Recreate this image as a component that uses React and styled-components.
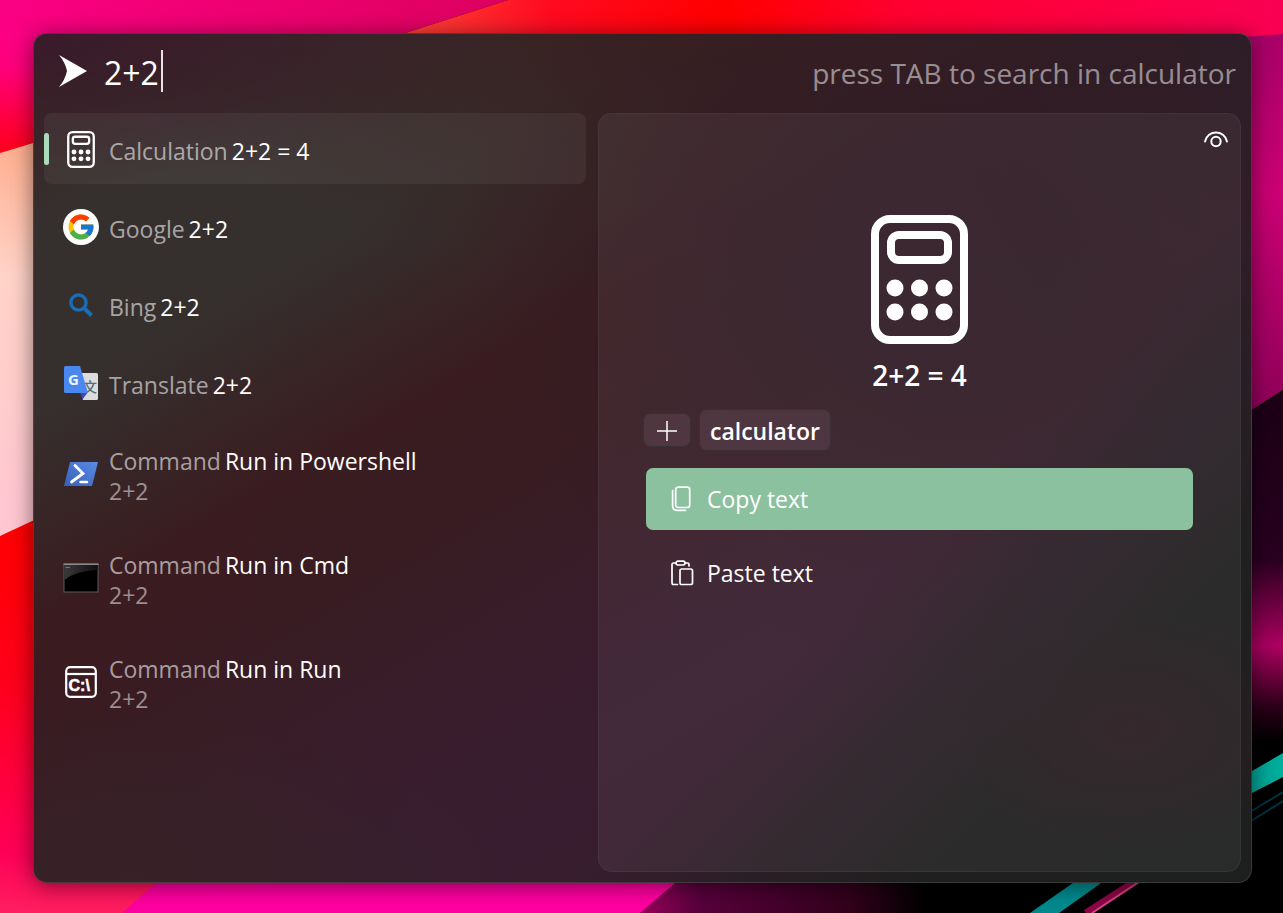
import React from 'react';
import styled, { createGlobalStyle } from 'styled-components';
import { FcGoogle } from 'react-icons/fc';

const GlobalStyle = createGlobalStyle`
  * {
    box-sizing: border-box;
  }
  body {
    margin: 0;
    background: #000;
    color: #fff;
    font-family: 'Open Sans', 'Noto Sans', sans-serif;
  }
  button,
  input {
    font: inherit;
    color: inherit;
    border: none;
    background: none;
    padding: 0;
    margin: 0;
  }
  svg {
    display: block;
    flex: none;
  }
`;

// wallpaper and window share one grid cell
const Desktop = styled.div`
  display: grid;
  min-height: 100vh;
  overflow: hidden;
  & > * {
    grid-area: 1 / 1;
  }
`;

const WallpaperSvg = styled.svg`
  width: 100%;
  height: 100%;
  min-height: 0;
  contain: size;
`;

const Launcher = styled.main`
  z-index: 1;
  display: flex;
  flex-direction: column;
  margin: 33px 31px 30px 33px;
  border: 1px solid rgba(120, 120, 120, 0.3);
  border-radius: 14px;
  background:
    radial-gradient(ellipse 16% 14% at 90% 82%, #2b1c21, rgba(43, 28, 33, 0)),
    linear-gradient(135deg, rgba(32, 31, 31, 0) 67%, #211f20 82%, #1d1f1f 100%),
    radial-gradient(ellipse 30% 50% at 100% 0%, #2e1d27, rgba(46, 29, 39, 0)),
    radial-gradient(ellipse 40% 18% at 0% 0%, #3a1a2a, rgba(58, 26, 42, 0)),
    radial-gradient(ellipse 40% 50% at 76% 26%, #301c25 20%, rgba(48, 28, 37, 0)),
    radial-gradient(ellipse 50% 28% at 55% 0%, #3a1f20, rgba(58, 31, 32, 0)),
    radial-gradient(ellipse 30% 20% at 8% 100%, #372226, rgba(55, 34, 38, 0)),
    linear-gradient(150deg, #372623 0%, #35302e 14%, #35302e 24%, #3a1c20 38%, #391c22 46%, #381d30 66%, #351d2a 100%);
  background-clip: border-box;
  background-origin: border-box;
  box-shadow: 0 3px 22px rgba(0, 0, 0, 0.5);
`;

const Header = styled.header`
  display: flex;
  align-items: center;
  height: 79px;
  padding: 0 15px 2px 25px;
`;

const Logo = styled.span`
  margin-bottom: 4px;
`;

const Query = styled.input`
  margin-left: 17px;
  width: 57px;
  font-size: 32px;
  line-height: 44px;
  outline: none;
  caret-color: transparent;
`;

const Caret = styled.span`
  width: 2px;
  height: 42px;
  margin-bottom: 4px;
  background: #e8e4e6;
`;

const Hint = styled.span`
  flex: 1;
  text-align: right;
  font-size: 28px;
  line-height: 44px;
  color: rgba(255, 255, 255, 0.5);
`;

const Body = styled.div`
  flex: 1;
  display: grid;
  grid-template-columns: 542fr 643fr;
  gap: 12px;
  padding: 0 10px 10px;
`;

const Results = styled.ul`
  display: flex;
  flex-direction: column;
  gap: 7px;
  margin: 0;
  padding: 0;
  list-style: none;
`;

const Row = styled.button`
  display: flex;
  align-items: center;
  gap: 10px;
  width: 100%;
  height: ${({ $tall }) => ($tall ? 97 : 71)}px;
  padding-top: 1px;
  text-align: left;
  border-radius: 8px;
  background: ${({ $active }) => ($active ? 'rgba(255, 255, 255, 0.055)' : 'none')};
  &::before {
    content: '';
    width: 5px;
    height: 32px;
    margin-right: 4px;
    border-radius: 3px;
    background: ${({ $active }) => ($active ? '#aadcbb' : 'none')};
  }
`;

const IconBox = styled.span`
  display: flex;
  align-items: center;
  justify-content: center;
  width: 36px;
  height: 36px;
  border-radius: 50%;
  background: ${({ $disc }) => ($disc ? '#fff' : 'none')};
`;

const Texts = styled.span`
  display: flex;
  flex-direction: column;
  padding-top: 3px;
`;

const Title = styled.span`
  display: flex;
  gap: 4px;
  font-size: 23px;
  line-height: 30px;
  white-space: nowrap;
`;

const Kind = styled.span`
  color: rgba(255, 255, 255, 0.58);
`;

const Subtitle = styled.span`
  font-size: 23px;
  line-height: 30px;
  color: rgba(255, 255, 255, 0.5);
`;

const Preview = styled.section`
  display: flex;
  flex-direction: column;
  padding: 12px 10px;
  border: 1px solid rgba(100, 110, 110, 0.16);
  border-radius: 14px;
  background: rgba(255, 255, 255, 0.055);
`;

const EyeButton = styled.button`
  align-self: flex-end;
  width: 28px;
  height: 28px;
`;

const Hero = styled.div`
  display: flex;
  flex-direction: column;
  align-items: center;
  gap: 12px;
  padding-top: 61px;
`;

const Answer = styled.h1`
  margin: 0;
  font-size: 28px;
  font-weight: 600;
  line-height: 38px;
`;

const Tags = styled.div`
  display: flex;
  align-items: center;
  gap: 8px;
  padding: 15px 34px 0;
`;

const Tag = styled.button`
  display: flex;
  align-items: center;
  justify-content: center;
  height: ${({ $small }) => ($small ? 34 : 42)}px;
  min-width: 48px;
  padding: 2px 10px 0;
  border: 1px solid rgba(50, 56, 56, 0.5);
  border-radius: 7px;
  background: rgba(255, 225, 255, 0.08);
  background-clip: padding-box;
  font-size: 23px;
  font-weight: 600;
`;

const Actions = styled.div`
  display: flex;
  flex-direction: column;
  gap: 12px;
  padding: 17px 37px 0;
`;

const Action = styled.button`
  display: flex;
  align-items: center;
  gap: 12px;
  height: 62px;
  padding-left: 24px;
  border-radius: 7px;
  font-size: 23px;
  background: ${({ $primary }) => ($primary ? '#8cc19f' : 'none')};
`;

const Wallpaper = () => (
  <WallpaperSvg viewBox="0 0 1283 913" preserveAspectRatio="none" aria-hidden="true">
    <defs>
      <linearGradient id="magenta" x1="0" y1="0" x2="1" y2="0">
        <stop offset="0" stopColor="#fb0084" />
        <stop offset="0.5" stopColor="#ee0070" />
        <stop offset="1" stopColor="#dd0060" />
      </linearGradient>
      <linearGradient id="leftFade" x1="0" y1="0" x2="0" y2="1">
        <stop offset="0" stopColor="#fb0084" />
        <stop offset="0.3" stopColor="#ff007c" />
        <stop offset="1" stopColor="#ff0018" />
      </linearGradient>
      <linearGradient id="red" x1="0" y1="0" x2="1" y2="0">
        <stop offset="0.05" stopColor="#ff5040" />
        <stop offset="0.24" stopColor="#ff0a20" />
        <stop offset="0.42" stopColor="#ff0000" />
        <stop offset="0.6" stopColor="#ff0030" />
        <stop offset="1" stopColor="#fa0054" />
      </linearGradient>
      <linearGradient id="pale" x1="0" y1="0" x2="0" y2="1">
        <stop offset="0" stopColor="#ffac8c" />
        <stop offset="0.35" stopColor="#ffd3c8" />
        <stop offset="1" stopColor="#ffc6d2" />
      </linearGradient>
      <linearGradient id="lowerLeft" x1="0" y1="0" x2="0" y2="1">
        <stop offset="0" stopColor="#ff0000" />
        <stop offset="0.4" stopColor="#ff0018" />
        <stop offset="0.85" stopColor="#ff0058" />
        <stop offset="1" stopColor="#ff1f60" />
      </linearGradient>
      <linearGradient id="rightEdge" x1="0" y1="0" x2="0" y2="1">
        <stop offset="0" stopColor="#a80068" />
        <stop offset="0.4" stopColor="#cc0074" />
        <stop offset="1" stopColor="#8c0058" />
      </linearGradient>
      <linearGradient id="night" x1="0" y1="0" x2="0" y2="1">
        <stop offset="0" stopColor="#1c0016" />
        <stop offset="0.38" stopColor="#280020" />
        <stop offset="0.58" stopColor="#ac0060" />
        <stop offset="0.72" stopColor="#2a0018" />
        <stop offset="0.8" stopColor="#000" />
        <stop offset="1" stopColor="#000" />
      </linearGradient>
      <linearGradient id="bottomFade" x1="0" y1="0" x2="1" y2="0">
        <stop offset="0" stopColor="#98005c" />
        <stop offset="0.14" stopColor="#58003c" />
        <stop offset="0.5" stopColor="#33001c" />
        <stop offset="0.68" stopColor="#000" />
      </linearGradient>
      <linearGradient id="teal" x1="0" y1="0" x2="1" y2="0">
        <stop offset="0" stopColor="#009c94" />
        <stop offset="1" stopColor="#00b09c" />
      </linearGradient>
    </defs>
    <rect width="1283" height="913" fill="#000" />
    <path d="M0 0H508L321 60H0Z" fill="url(#magenta)" />
    <path d="M0 30H60V140L0 155Z" fill="url(#leftFade)" />
    <path d="M508 0H1283V60H321Z" fill="url(#red)" />
    <path d="M0 153L60 135V518L0 537Z" fill="url(#pale)" />
    <path d="M0 536L60 508V860L200 870V913H0Z" fill="url(#lowerLeft)" />
    <path d="M182 860H740L640 913H122Z" fill="#ff00a0" />
    <path d="M702 860H1060V913H640Z" fill="url(#bottomFade)" />
    <path d="M1230 38L1283 34V390L1230 424Z" fill="url(#rightEdge)" />
    <path d="M1230 424L1283 392V830H1230Z" fill="url(#night)" />
    <path d="M1240 778L1283 753V777L1240 799Z" fill="url(#teal)" />
    <path d="M1240 828L1283 801M1240 818L1283 792" stroke="#013442" strokeWidth="2" />
    <path d="M1100 864L1030 913H1059L1128 864Z" fill="#008a8e" />
    <path d="M1162 864L1086 913" stroke="#8e0546" strokeWidth="7" />
    <path d="M1166 864L1092 913" stroke="#d64585" strokeWidth="2" />
  </WallpaperSvg>
);

const ArrowLogo = () => (
  <svg width="28" height="34" viewBox="0 0 28 34" fill="#fff">
    <path d="M0 1Q14 9 28 17Q14 25 0 33Q6 26 8 17Q6 8 0 1Z" />
  </svg>
);

const CalculatorIcon = ({ width, height }) => (
  <svg width={width} height={height} viewBox="0 0 97 129" fill="none" stroke="#fff" strokeWidth="8">
    <rect x="4" y="4" width="89" height="121" rx="15" />
    <rect x="20" y="20" width="57" height="25" rx="8" />
    <g fill="#fff" stroke="none">
      <circle cx="24" cy="73" r="8.5" />
      <circle cx="48.5" cy="73" r="8.5" />
      <circle cx="73" cy="73" r="8.5" />
      <circle cx="24" cy="97" r="8.5" />
      <circle cx="48.5" cy="97" r="8.5" />
      <circle cx="73" cy="97" r="8.5" />
    </g>
  </svg>
);

const SearchIcon = () => (
  <svg width="24" height="24" viewBox="0 0 24 24" fill="none" stroke="#1a6db5" strokeWidth="3.4">
    <circle cx="9.5" cy="9.5" r="7.6" />
    <path d="M15 15L22.5 22.5" strokeWidth="4" />
  </svg>
);

const TranslateIcon = () => (
  <svg width="36" height="36" viewBox="0 0 36 36">
    <path d="M14 8H33.5Q35 8 35 9.5V33.5Q35 35 33.5 35H20Z" fill="#dcdcdc" />
    <text x="20" y="27" fontSize="14" fontWeight="500" fill="#546e7a" fontFamily="Noto Sans CJK SC, sans-serif">
      文
    </text>
    <path d="M17 27H25L19.5 34.5Z" fill="#3f48b8" />
    <path d="M2.5 1H17L25 28H2.5Q1 28 1 26.5V2.5Q1 1 2.5 1Z" fill="#4a87ee" />
    <text x="5" y="20" fontSize="15" fontWeight="700" fill="#eef3fd" fontFamily="Open Sans, sans-serif">
      G
    </text>
  </svg>
);

const PowershellIcon = () => (
  <svg width="36" height="26" viewBox="0 0 36 26" fill="none">
    <defs>
      <linearGradient id="ps" x1="0" y1="1" x2="1" y2="0">
        <stop offset="0" stopColor="#3660b8" />
        <stop offset="1" stopColor="#5a8ae6" />
      </linearGradient>
    </defs>
    <path d="M7 1H35L29 25H1Z" fill="url(#ps)" />
    <path d="M12 4.5L20 12.5L8.5 21" stroke="#fff" strokeWidth="2.8" strokeLinecap="round" />
    <path d="M17.5 21H24" stroke="#fff" strokeWidth="2.5" strokeLinecap="round" />
  </svg>
);

const CmdIcon = () => (
  <svg width="36" height="30" viewBox="0 0 36 30">
    <defs>
      <linearGradient id="gloss" x1="0" y1="0" x2="1" y2="0">
        <stop offset="0" stopColor="#3a3a3a" />
        <stop offset="1" stopColor="#101010" />
      </linearGradient>
    </defs>
    <rect x="1" y="1" width="34" height="28" fill="#000" stroke="#5c5a5c" />
    <path d="M1.5 2H34.5V7Q12 8 1.5 17Z" fill="url(#gloss)" />
    <path d="M0.5 1.2H35.5" stroke="#8b898d" strokeWidth="1.6" />
    <path d="M2.5 4.5H7" stroke="#777" />
  </svg>
);

const RunIcon = () => (
  <svg width="32" height="32" viewBox="0 0 32 32" fill="none" stroke="#fff" strokeWidth="2.2">
    <rect x="1.2" y="1.2" width="29.6" height="29.6" rx="4" />
    <path d="M1 8H31" />
    <text x="3.5" y="25" fontSize="16" fontWeight="700" fill="#fff" strokeWidth="0.5" fontFamily="Liberation Sans, sans-serif">
      C:\
    </text>
  </svg>
);

const EyeIcon = () => (
  <svg width="28" height="28" viewBox="0 0 28 28" fill="none" stroke="#fff" strokeWidth="2" strokeLinecap="round">
    <path d="M3 15.5C5.500 3.500 22.500 3.500 25 15.500" />
    <circle cx="14" cy="15.5" r="4.7" />
  </svg>
);

const PlusIcon = () => (
  <svg width="20" height="20" viewBox="0 0 20 20" stroke="#fff" strokeWidth="1.5">
    <path d="M10 0V20M0 10H20" />
  </svg>
);

const CopyIcon = () => (
  <svg width="25" height="26" viewBox="0 0 25 26" fill="none" stroke="#fff" strokeWidth="1.7" strokeLinecap="round">
    <rect x="5.7" y="1.2" width="14" height="20.3" rx="2.5" />
    <path d="M2.6 4.5V19.500Q2.600 24.300 7 24.300H15.500" />
  </svg>
);

const PasteIcon = () => (
  <svg width="25" height="26" viewBox="0 0 25 26" fill="none" stroke="#fff" strokeWidth="1.7" strokeLinecap="round">
    <path d="M6 3H3.5Q2 3 2 4.5V22.5Q2 24.5 3.5 24.5H7.5M15 3H17.5Q19 3 19 4.5V6" />
    <rect x="6" y="1.2" width="9" height="3.8" rx="1.9" />
    <rect x="10" y="9" width="12.5" height="15.5" rx="1.8" />
  </svg>
);

const results = [
  { kind: 'Calculation', title: '2+2 = 4', icon: <CalculatorIcon width={28} height={37} />, active: true },
  { kind: 'Google', title: '2+2', icon: <FcGoogle size={30} />, disc: true },
  { kind: 'Bing', title: '2+2', icon: <SearchIcon /> },
  { kind: 'Translate', title: '2+2', icon: <TranslateIcon /> },
  { kind: 'Command', title: 'Run in Powershell', sub: '2+2', icon: <PowershellIcon /> },
  { kind: 'Command', title: 'Run in Cmd', sub: '2+2', icon: <CmdIcon /> },
  { kind: 'Command', title: 'Run in Run', sub: '2+2', icon: <RunIcon /> },
];

const App = () => {
  return (
    <>
      <GlobalStyle />
      <Desktop>
        <Wallpaper />
        <Launcher>
          <Header>
            <Logo>
              <ArrowLogo />
            </Logo>
            <Query aria-label="Search" defaultValue="2+2" />
            <Caret />
            <Hint>press TAB to search in calculator</Hint>
          </Header>
          <Body>
            <Results>
              {results.map((item) => (
                <li key={item.kind + item.title}>
                  <Row type="button" $active={item.active} $tall={!!item.sub}>
                    <IconBox $disc={item.disc}>{item.icon}</IconBox>
                    <Texts>
                      <Title>
                        <Kind>{item.kind}</Kind>
                        <span>{item.title}</span>
                      </Title>
                      {item.sub && <Subtitle>{item.sub}</Subtitle>}
                    </Texts>
                  </Row>
                </li>
              ))}
            </Results>
            <Preview>
              <EyeButton type="button" aria-label="Toggle preview">
                <EyeIcon />
              </EyeButton>
              <Hero>
                <CalculatorIcon width={97} height={129} />
                <Answer>2+2 = 4</Answer>
              </Hero>
              <Tags>
                <Tag type="button" $small aria-label="Add tag">
                  <PlusIcon />
                </Tag>
                <Tag type="button">calculator</Tag>
              </Tags>
              <Actions>
                <Action type="button" $primary>
                  <CopyIcon />
                  Copy text
                </Action>
                <Action type="button">
                  <PasteIcon />
                  Paste text
                </Action>
              </Actions>
            </Preview>
          </Body>
        </Launcher>
      </Desktop>
    </>
  );
};

export default App;
